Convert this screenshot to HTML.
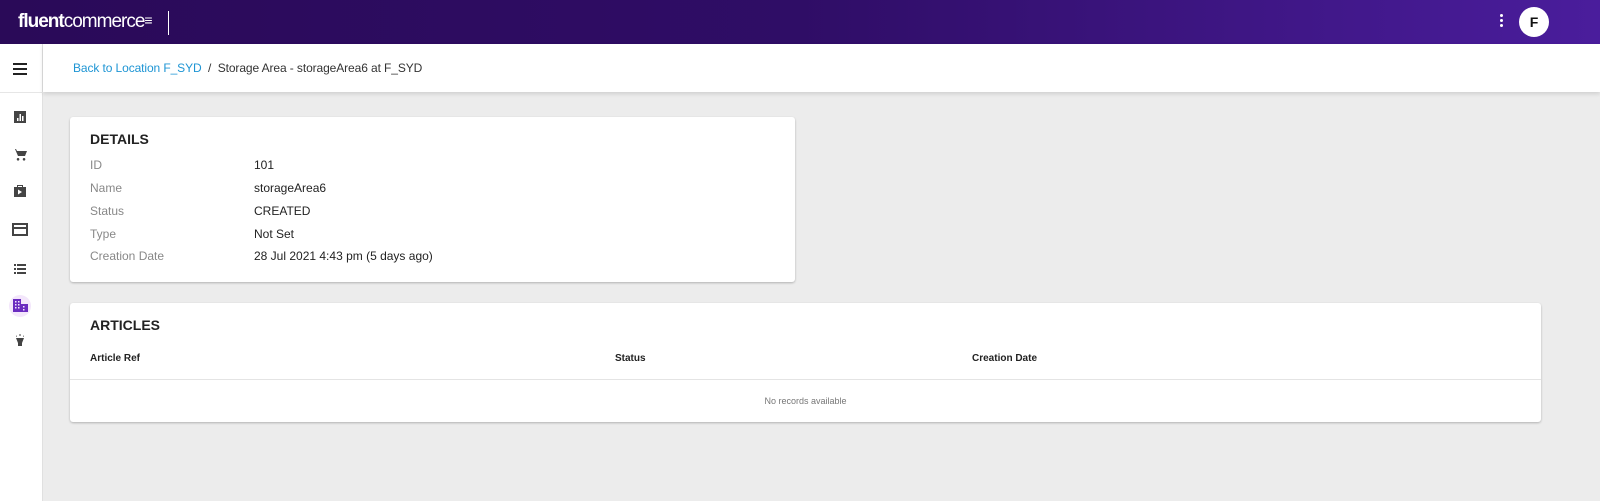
<!DOCTYPE html>
<html><head><style>
*{box-sizing:border-box;margin:0;padding:0}
body{width:1600px;height:501px;overflow:hidden;background:#ececec;font-family:"Liberation Sans",sans-serif;position:relative}
.top{position:absolute;left:0;top:0;width:1600px;height:44px;background:linear-gradient(90deg,#2a0a58 0%,#2f0d66 50%,#4a1d9c 100%)}
.logo{position:absolute;left:18px;top:11px;color:#fff;font-size:19px;letter-spacing:-1px;font-family:"Liberation Sans Narrow","Liberation Sans",sans-serif}
.sep{position:absolute;left:168px;top:11px;width:1px;height:24px;background:#fff}
.dots{position:absolute;left:1500px;top:14px}
.dots i{display:block;width:3px;height:3px;background:#fff;border-radius:50%;margin-bottom:2px}
.av{position:absolute;left:1519px;top:7px;width:30px;height:30px;border-radius:50%;background:#fff;color:#111;font-weight:bold;font-size:14px;text-align:center;line-height:30px}
.side{position:absolute;left:0;top:44px;width:43px;height:457px;background:#fff;border-right:1px solid #e0e0e0}
.side .hr{position:absolute;left:0;top:48px;width:43px;height:1px;background:#e6e6e6}
.crumb{position:absolute;left:43px;top:44px;width:1557px;height:48px;background:#fff;box-shadow:0 2px 4px rgba(0,0,0,.12);font-size:12px;letter-spacing:-0.1px;line-height:48px;padding-left:30px;color:#333}
.crumb a{color:#1e95d4;text-decoration:none}
.card{position:absolute;background:#fff;border-radius:3px;box-shadow:0 1px 2px rgba(0,0,0,.25)}
h2{position:absolute;left:20px;top:14px;font-size:14px;font-weight:bold;color:#222}
.row{position:absolute;left:20px;font-size:12px;color:#888}
.row span{position:absolute;left:164px;color:#222;white-space:nowrap}
.th{position:absolute;top:50px;font-size:10px;font-weight:bold;color:#222}
</style></head><body>
<div class="top">
<div class="logo"><span style="font-weight:bold">fluent</span>commerce<span style="font-size:14px;vertical-align:2px">&#8801;</span></div>
<div class="sep"></div>
<div class="dots"><i></i><i></i><i></i></div>
<div class="av">F</div>
</div>
<div class="side">
<svg width="43" height="457" style="position:absolute;left:0;top:0">
<g fill="#222"><rect x="13" y="19" width="14" height="2"/><rect x="13" y="24" width="14" height="2"/><rect x="13" y="29" width="14" height="2"/></g>
<g fill="#444">
<path d="M14 67h12v12h-12z M17 74v3h1.5v-3z M19.5 70v7h1.5v-7z M22 72v5h1.5v-5z" fill-rule="evenodd"/>
<path d="M13 105h2l3 7h7l2-5h-10l-1-2h-3z M18 114a1.3 1.3 0 1 0 .1 0z M24 114a1.3 1.3 0 1 0 .1 0z"/>
<path d="M14 143h12v10h-12z M17 143v-2h6v2h-1v-1h-4v1z M18 145.5v5l4-2.5z" fill-rule="evenodd"/>
<path d="M13 180h14v11h-14z" fill="none" stroke="#444" stroke-width="2"/><rect x="13" y="183" width="14" height="2"/>
<rect x="14" y="220" width="2" height="2"/><rect x="17" y="220" width="9" height="2"/><rect x="14" y="224" width="2" height="2"/><rect x="17" y="224" width="9" height="2"/><rect x="14" y="228" width="2" height="2"/><rect x="17" y="228" width="9" height="2"/>
<path d="M16 294h8l-2 5v3h-4v-3z M19.5 290h1v2h-1z M16 291l1 1.5-.8.5z M24 291l-1 1.5.8.5z"/>
</g>
<circle cx="20" cy="262" r="11" fill="#f3e6fb"/>
<g fill="#6a2bc0"><path d="M13 255h8v13h-8z M21 260h7v8h-7z"/></g>
<g fill="#f3e6fb"><rect x="15" y="257" width="1.5" height="1.5"/><rect x="18" y="257" width="1.5" height="1.5"/><rect x="15" y="260" width="1.5" height="1.5"/><rect x="18" y="260" width="1.5" height="1.5"/><rect x="15" y="263" width="1.5" height="1.5"/><rect x="18" y="263" width="1.5" height="1.5"/><rect x="23" y="262" width="1.5" height="1.5"/><rect x="23" y="265" width="1.5" height="1.5"/></g>
</svg>
<div class="hr"></div>
</div>
<div class="crumb"><a>Back to Location F_SYD</a>&nbsp; / &nbsp;Storage Area - storageArea6 at F_SYD</div>
<div class="card" style="left:70px;top:117px;width:725px;height:165px">
<h2>DETAILS</h2>
<div class="row" style="top:41px">ID<span>101</span></div>
<div class="row" style="top:64px">Name<span>storageArea6</span></div>
<div class="row" style="top:87px">Status<span>CREATED</span></div>
<div class="row" style="top:110px">Type<span>Not Set</span></div>
<div class="row" style="top:132px">Creation Date<span>28 Jul 2021 4:43 pm (5 days ago)</span></div>
</div>
<div class="card" style="left:70px;top:303px;width:1471px;height:119px">
<h2>ARTICLES</h2>
<div class="th" style="left:20px">Article Ref</div>
<div class="th" style="left:545px">Status</div>
<div class="th" style="left:902px">Creation Date</div>
<div style="position:absolute;left:0;top:76px;width:100%;height:1px;background:#e4e4e4"></div>
<div style="position:absolute;left:0;top:93px;width:100%;text-align:center;font-size:9px;color:#777">No records available</div>
</div>
</body></html>
